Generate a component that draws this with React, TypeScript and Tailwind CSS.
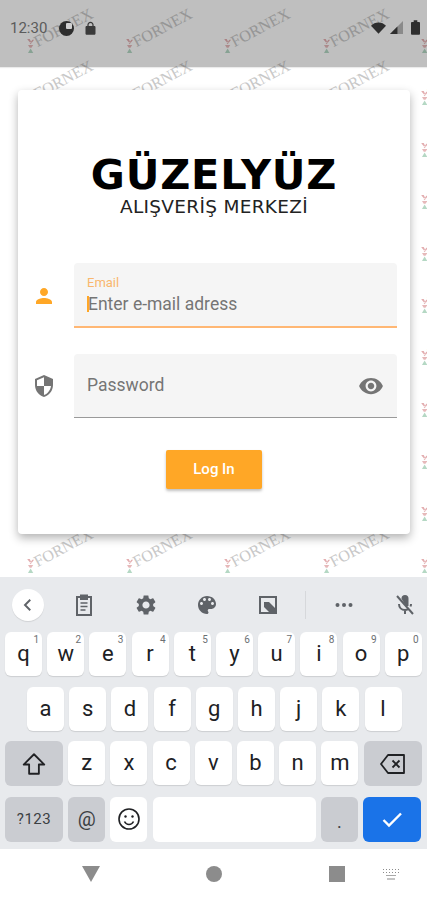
const row1 = [['q', '1'], ['w', '2'], ['e', '3'], ['r', '4'], ['t', '5'], ['y', '6'], ['u', '7'], ['i', '8'], ['o', '9'], ['p', '0']];
const row2 = ['a', 's', 'd', 'f', 'g', 'h', 'j', 'k', 'l'];
const row3 = ['z', 'x', 'c', 'v', 'b', 'n', 'm'];
const watermarks = Array.from({ length: 66 }, (_, i) => i);

function Icon({ d, className }: { d: string; className: string }) {
    return (
        <svg viewBox="0 0 24 24" className={className} fill="currentColor">
            <path d={d} />
        </svg>
    );
}

function Watermark() {
    return (
        <div className="flex h-[52px] w-[98.5px] items-center justify-center">
            <div className="flex -rotate-[28deg] items-center gap-[2px] font-['Liberation_Serif',serif] text-[16px] leading-none text-[#c8c8c8]">
                <svg viewBox="0 0 8 16" className="h-[15px] w-[7px] rotate-[28deg]">
                    <path d="M0 0l4 5 1-1-2-4zM8 1L4 6 3 5l3-4z" fill="#e3aeb0" />
                    <path d="M1 7h6L5 10H3z" fill="#e6b9ba" />
                    <path d="M4 11l3 5H1z" fill="#b5d8c4" />
                </svg>
                <span>FORNEX</span>
            </div>
        </div>
    );
}

function Key({ label, sup }: { label: string; sup?: string }) {
    return (
        <div className="relative flex h-[44px] w-[37px] items-center justify-center rounded-[6px] bg-white text-[22px] leading-none text-[#202124] shadow-[0_1px_1px_rgba(0,0,0,0.12)]">
            {label}
            {sup && <span className="absolute right-[3px] top-[3px] text-[10px] leading-none text-[#6b6f73]">{sup}</span>}
        </div>
    );
}

export default function App() {
    return (
        <div className="relative flex h-[900px] w-[427px] flex-col overflow-hidden bg-white font-['Roboto',sans-serif]">
            {/* watermark tiled behind the whole page */}
            <div className="absolute -left-[88px] top-[4px] grid grid-cols-[repeat(6,98.5px)] auto-rows-[52px]">
                {watermarks.map(i => {
                    // rows 2-9 of the middle columns sit fully under the card
                    const row = Math.floor(i / 6);
                    const col = i % 6;
                    if (row >= 2 && row <= 9 && col >= 1 && col <= 4) return <div key={i} />;
                    return <Watermark key={i} />;
                })}
            </div>

            {/* Status bar */}
            <div className="relative flex h-[67px] shrink-0 items-start justify-between bg-[rgba(0,0,0,0.25)] pl-[10px] pr-[7px] pt-[19px] shadow-[0_1px_1px_rgba(0,0,0,0.08)]">
                <div className="flex items-center">
                    <span className="text-[15px] leading-[18px] text-[#5b5b5b]">12:30</span>
                    <div className="ml-[12px] mt-[1px] flex h-[15px] w-[15px] justify-end rounded-full bg-[#2e2e2e] p-[2px]">
                        <div className="h-[6px] w-[6px] rounded-[1px] bg-[#d0d0d0]" />
                    </div>
                    <Icon className="ml-[9px] h-[15px] w-[15px] text-[#3a3a3a]" d="M18 8h-1V6c0-2.76-2.24-5-5-5S7 3.24 7 6v2H6c-1.1 0-2 .9-2 2v10c0 1.1.9 2 2 2h12c1.1 0 2-.9 2-2V10c0-1.1-.9-2-2-2zM9 6c0-1.66 1.34-3 3-3s3 1.34 3 3v2H9V6z" />
                </div>
                <div className="flex items-center gap-[3px] pt-[1px]">
                    <svg viewBox="0 0 16 12" className="h-[12px] w-[15px] text-[#2e2e2e]" fill="currentColor"><path d="M0 3.5C2 1.3 5 0 8 0s6 1.3 8 3.5L8 12z" /></svg>
                    <svg viewBox="0 0 14 14" className="ml-[1px] h-[13px] w-[13px]"><path d="M14 0v14H0z" fill="#8a8a8a" /><path d="M8 6v8H0z" fill="#2e2e2e" /></svg>
                    <svg viewBox="0 0 10 16" className="ml-[5px] h-[15px] w-[9px] text-[#2e2e2e]" fill="currentColor"><path d="M3 0h4v2h2a1 1 0 0 1 1 1v12a1 1 0 0 1-1 1H1a1 1 0 0 1-1-1V3a1 1 0 0 1 1-1h2z" /></svg>
                </div>
            </div>

            {/* Login card */}
            <div className="relative ml-[18px] mt-[23px] h-[445px] w-[392px] rounded-[4px] bg-white shadow-[0_4px_10px_rgba(0,0,0,0.3)]">
                <div className="flex flex-col items-center pt-[62px] font-['DejaVu_Sans',sans-serif] text-black">
                    <div className="text-[41.5px] font-bold leading-[46px] tracking-[0.8px]">GÜZELYÜZ</div>
                    <div className="mt-[-2px] text-[18.5px] leading-[22px] tracking-[0.3px] text-[#222]">ALIŞVERİŞ MERKEZİ</div>
                </div>

                <div className="mt-[45px] flex items-center pl-[14px]">
                    <Icon className="mr-[18px] h-[24px] w-[24px] text-[#ffa726]" d="M12 12c2.21 0 4-1.79 4-4s-1.79-4-4-4-4 1.79-4 4 1.79 4 4 4zm0 2c-2.67 0-8 1.34-8 4v2h16v-2c0-2.66-5.33-4-8-4z" />
                    <div className="h-[65px] w-[323px] rounded-t-[4px] border-b-2 border-[#ffb774] bg-[#f5f5f5] pl-[13px] pt-[13px]">
                        <div className="text-[13px] leading-[14px] text-[#f9b76e]">Email</div>
                        <div className="mt-[4px] flex items-center text-[17.5px] leading-[20px] text-[#757575]">
                            <div className="-mr-[1px] h-[16px] w-[2px] bg-[#ffa726]" />
                            Enter e-mail adress
                        </div>
                    </div>
                </div>

                <div className="mt-[26px] flex items-center pl-[14px]">
                    <Icon className="mr-[18px] h-[24px] w-[24px] text-[#757575]" d="M12 1L3 5v6c0 5.55 3.84 10.74 9 12 5.16-1.26 9-6.45 9-12V5l-9-4zm0 10.99h7c-.53 4.12-3.28 7.79-7 8.94V12H5V6.3l7-3.11v8.8z" />
                    <div className="flex h-[64px] w-[323px] items-center justify-between rounded-t-[4px] border-b border-[#9a9a9a] bg-[#f5f5f5] pl-[13px] pr-[13px]">
                        <span className="text-[17.5px] text-[#757575]">Password</span>
                        <Icon className="h-[26px] w-[26px] text-[#757575]" d="M12 4.5C7 4.5 2.73 7.61 1 12c1.73 4.39 6 7.5 11 7.5s9.27-3.11 11-7.5c-1.73-4.39-6-7.5-11-7.5zM12 17c-2.76 0-5-2.24-5-5s2.24-5 5-5 5 2.24 5 5-2.24 5-5 5zm0-8c-1.66 0-3 1.34-3 3s1.34 3 3 3 3-1.34 3-3-1.34-3-3-3z" />
                    </div>
                </div>

                <div className="mt-[32px] flex justify-center">
                    <div className="flex h-[39px] w-[96px] items-center justify-center rounded-[2px] bg-[#ffa726] text-[15px] font-medium text-white shadow-[0_2px_3px_rgba(0,0,0,0.25)]">Log In</div>
                </div>
            </div>

            {/* Keyboard */}
            <div className="relative mt-[43px] h-[272px] shrink-0 bg-[#e8eaed]">
                <div className="flex h-[55px] items-center text-[#5f6368]">
                    <div className="ml-[12px] flex h-[32px] w-[32px] items-center justify-center rounded-full bg-white shadow-[0_1px_1px_rgba(0,0,0,0.1)]">
                        <svg viewBox="0 0 24 24" className="h-[18px] w-[18px]" fill="none" stroke="currentColor" strokeWidth="2.6"><path d="M15 5l-7 7 7 7" /></svg>
                    </div>
                    <svg viewBox="0 0 24 24" className="ml-[28px] h-[24px] w-[24px]" fill="none" stroke="currentColor" strokeWidth="2">
                        <path d="M8 4H5v18h14V4h-3" />
                        <path d="M9 2.5h6V6H9z" fill="currentColor" />
                        <path d="M8.5 10h7M8.5 13.5h7M8.5 17h5" strokeWidth="1.6" />
                    </svg>
                    <Icon className="ml-[38px] h-[24px] w-[24px]" d="M19.14 12.94c.04-.3.06-.61.06-.94 0-.32-.02-.64-.07-.94l2.03-1.58c.18-.14.23-.41.12-.61l-1.92-3.32c-.12-.22-.37-.29-.59-.22l-2.39.96c-.5-.38-1.03-.7-1.62-.94l-.36-2.54c-.04-.24-.24-.41-.48-.41h-3.84c-.24 0-.43.17-.47.41l-.36 2.54c-.59.24-1.13.57-1.62.94l-2.39-.96c-.22-.08-.47 0-.59.22L2.74 8.87c-.12.21-.08.47.12.61l2.03 1.58c-.05.3-.09.63-.09.94s.02.64.07.94l-2.03 1.58c-.18.14-.23.41-.12.61l1.92 3.32c.12.22.37.29.59.22l2.39-.96c.5.38 1.03.7 1.62.94l.36 2.54c.05.24.24.41.48.41h3.84c.24 0 .44-.17.47-.41l.36-2.54c.59-.24 1.13-.56 1.62-.94l2.39.96c.22.08.47 0 .59-.22l1.92-3.32c.12-.22.07-.47-.12-.61l-2.01-1.58zM12 15.6c-1.98 0-3.6-1.62-3.6-3.6s1.62-3.6 3.6-3.6 3.6 1.62 3.6 3.6-1.62 3.6-3.6 3.6z" />
                    <Icon className="ml-[37px] h-[24px] w-[24px]" d="M12 3c-4.97 0-9 4.03-9 9s4.03 9 9 9c.83 0 1.5-.67 1.5-1.5 0-.39-.15-.74-.39-1.01-.23-.26-.38-.61-.38-.99 0-.83.67-1.5 1.5-1.5H16c2.76 0 5-2.24 5-5 0-4.42-4.03-8-9-8zm-5.5 9c-.83 0-1.5-.67-1.5-1.5S5.67 9 6.5 9 8 9.67 8 10.5 7.33 12 6.5 12zm3-4C8.67 8 8 7.33 8 6.5S8.67 5 9.5 5s1.5.67 1.5 1.5S10.33 8 9.5 8zm5 0c-.83 0-1.5-.67-1.5-1.5S13.67 5 14.5 5s1.5.67 1.5 1.5S15.33 8 14.5 8zm3 4c-.83 0-1.5-.67-1.5-1.5S16.67 9 17.5 9s1.5.67 1.5 1.5-.67 1.5-1.5 1.5z" />
                    <svg viewBox="0 0 24 24" className="ml-[37px] h-[24px] w-[24px]" fill="none" stroke="currentColor" strokeWidth="2">
                        <path d="M4 4h16v16H4z" />
                        <path d="M8 9h5l7 7v5h-5l-7-7z" fill="currentColor" stroke="none" />
                    </svg>
                    <div className="ml-[25px] h-[28px] w-px bg-[#d6d8db]" />
                    <svg viewBox="0 0 24 24" className="ml-[26px] h-[24px] w-[24px]" fill="currentColor"><circle cx="5.5" cy="12" r="2" /><circle cx="12" cy="12" r="2" /><circle cx="18.5" cy="12" r="2" /></svg>
                    <svg viewBox="0 0 24 24" className="ml-[37px] h-[24px] w-[24px]" fill="none" stroke="currentColor" strokeWidth="2">
                        <path d="M9.5 5.5a2.5 2.5 0 0 1 5 0V12h-1z" fill="currentColor" />
                        <path d="M6 11c0 3.5 2.5 6 6 6 1.2 0 2.3-.3 3.2-.8M18 11c0 1-.2 1.7-.5 2.5M12 17v4" />
                        <path d="M4 3l16 18" />
                    </svg>
                </div>

                <div className="flex flex-col gap-[10.5px] pl-[5px]">
                    <div className="flex gap-[5.2px]">
                        {row1.map(([l, s]) => <Key key={l} label={l} sup={s} />)}
                    </div>
                    <div className="flex gap-[5.2px] pl-[22px]">
                        {row2.map(l => <Key key={l} label={l} />)}
                    </div>
                    <div className="flex gap-[5.2px]">
                        <div className="flex h-[45px] w-[58px] items-center justify-center rounded-[6px] bg-[#caccd1]">
                            <svg viewBox="0 0 24 24" className="h-[26px] w-[26px] text-[#202124]" fill="none" stroke="currentColor" strokeWidth="1.7" strokeLinejoin="round"><path d="M12 3L2.5 12.5H7.5V21h9v-8.5h5z" /></svg>
                        </div>
                        {row3.map(l => <Key key={l} label={l} />)}
                        <div className="flex h-[45px] w-[58px] items-center justify-center rounded-[6px] bg-[#caccd1]">
                            <svg viewBox="0 0 26 22" className="h-[22px] w-[28px] text-[#202124]" fill="none" stroke="currentColor" strokeWidth="1.8" strokeLinejoin="round"><path d="M8 2h16v18H8L1 11z" /><path d="M12.5 7.5l7 7M19.5 7.5l-7 7" /></svg>
                        </div>
                    </div>
                    <div className="flex gap-[5.2px]">
                        <div className="flex h-[45px] w-[58px] items-center justify-center rounded-[6px] bg-[#caccd1] text-[15px] tracking-[0.5px] text-[#3c4043]">?123</div>
                        <div className="flex h-[45px] w-[37px] items-center justify-center rounded-[6px] bg-[#caccd1] text-[20px] text-[#3c4043]">@</div>
                        <div className="flex h-[45px] w-[37px] items-center justify-center rounded-[6px] bg-white">
                            <svg viewBox="0 0 24 24" className="h-[24px] w-[24px] text-[#202124]" fill="none" stroke="currentColor" strokeWidth="1.6"><circle cx="12" cy="12" r="10" /><path d="M7.5 14.5c1 2 2.6 3 4.5 3s3.500-1 4.500-3" /><circle cx="8.500" cy="9.500" r="1.200" fill="currentColor" stroke="none" /><circle cx="15.500" cy="9.500" r="1.200" fill="currentColor" stroke="none" /></svg>
                        </div>
                        <div className="h-[45px] w-[163px] rounded-[6px] bg-white" />
                        <div className="flex h-[45px] w-[37px] items-end justify-center rounded-[6px] bg-[#caccd1] pb-[11px] text-[18px] leading-none text-[#3c4043]">.</div>
                        <div className="flex h-[45px] w-[58px] items-center justify-center rounded-[6px] bg-[#1a73e8]">
                            <svg viewBox="0 0 24 24" className="h-[24px] w-[24px] text-white" fill="none" stroke="currentColor" strokeWidth="2.4"><path d="M3.500 13l5.500 5.500L21 6.500" /></svg>
                        </div>
                    </div>
                </div>
            </div>

            {/* Navigation bar */}
            <div className="relative flex h-[51px] shrink-0 items-center bg-white pb-[1px] text-[#8c8c8c]">
                <svg viewBox="0 0 18 16" className="ml-[82px] h-[16px] w-[18px]" fill="currentColor"><path d="M0 0h18L9 16z" /></svg>
                <div className="ml-[106px] h-[16px] w-[16px] rounded-full bg-[#8c8c8c]" />
                <div className="ml-[107px] h-[16px] w-[16px] bg-[#8c8c8c]" />
                <svg viewBox="0 0 18 12" className="ml-[37px] h-[12px] w-[18px]" fill="currentColor">
                    <path d="M1 1h1v1H1zM4 1h1v1H4zM7 1h1v1H7zM10 1h1v1h-1zM13 1h1v1h-1zM16 1h1v1h-1zM1 4h1v1H1zM4 4h1v1H4zM7 4h1v1H7zM10 4h1v1h-1zM13 4h1v1h-1zM16 4h1v1h-1zM4 7h10v0.800H4zM5 10.500h8v1H5z" />
                </svg>
            </div>
        </div>
    );
}
